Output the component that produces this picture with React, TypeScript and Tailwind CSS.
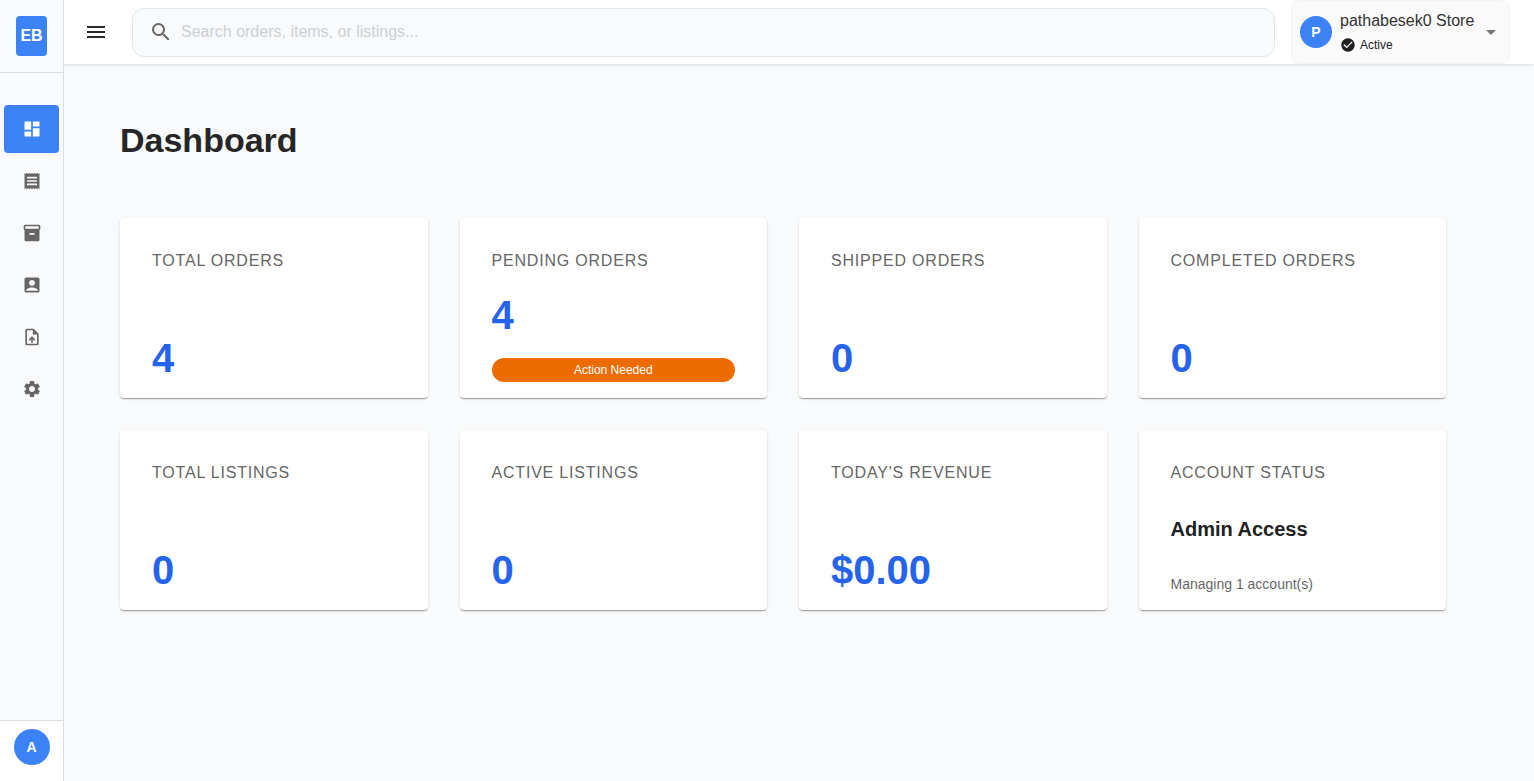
import type { ReactNode } from "react";
import type { IconType } from "react-icons";
import {
  MdAccountBox,
  MdArrowDropDown,
  MdCheckCircle,
  MdDashboard,
  MdInventory2,
  MdMenu,
  MdReceipt,
  MdSearch,
  MdSettings,
  MdUploadFile,
} from "react-icons/md";

const navItems: { label: string; icon: IconType; active?: boolean }[] = [
  { label: "Dashboard", icon: MdDashboard, active: true },
  { label: "Orders", icon: MdReceipt },
  { label: "Listings", icon: MdInventory2 },
  { label: "Accounts", icon: MdAccountBox },
  { label: "Import", icon: MdUploadFile },
  { label: "Settings", icon: MdSettings },
];

function Sidebar() {
  return (
    <aside className="z-10 flex w-16 shrink-0 flex-col border-r border-[#dcdddf] bg-[#f8fafc]">
      <div className="border-b border-[#dcdddf] p-4">
        <div className="flex h-10 items-center justify-center rounded bg-[#3b82f6] font-bold text-white">
          EB
        </div>
      </div>
      <nav className="flex grow flex-col gap-1 px-1 pt-8">
        {navItems.map(({ label, icon: Icon, active }) => (
          <a
            key={label}
            href="#"
            aria-label={label}
            aria-current={active ? "page" : undefined}
            className={
              active
                ? "flex h-12 items-center justify-center rounded bg-[#3b82f6] text-white"
                : "flex h-12 items-center justify-center rounded text-[#666666]"
            }
          >
            <Icon className="size-5" />
          </a>
        ))}
      </nav>
      <div className="flex justify-center border-t border-[#dcdddf] bg-white pt-2 pb-4">
        <button
          type="button"
          aria-label="User menu"
          className="flex size-9 items-center justify-center rounded-full bg-[#3b82f6] text-sm font-bold text-white"
        >
          A
        </button>
      </div>
    </aside>
  );
}

function TopBar() {
  return (
    <header className="flex h-16 items-center bg-white pr-6 pl-2 shadow-[0_1px_3px_rgba(0,0,0,0.12)]">
      <button
        type="button"
        aria-label="Toggle menu"
        className="mr-3 flex size-12 shrink-0 items-center justify-center text-[#2b2b2b]"
      >
        <MdMenu className="size-6" />
      </button>
      <label className="mr-4 flex h-[49px] grow items-center gap-2 rounded-xl border border-[#e2e5ea] bg-[#f8fafc] px-4">
        <MdSearch className="size-6 shrink-0 text-[#666666]" aria-hidden />
        <input
          type="search"
          aria-label="Search"
          placeholder="Search orders, items, or listings..."
          className="h-full w-full bg-transparent text-base text-[#212121] outline-none placeholder:text-[#cccfd2]"
        />
      </label>
      <button
        type="button"
        aria-haspopup="listbox"
        className="flex h-16 min-w-[219px] shrink-0 items-center gap-1 rounded-lg border border-[#f4f4f4] bg-[#fafafa] pr-1.5 pl-2 text-left text-[#212121]"
      >
        <span className="mr-1 flex size-8 items-center justify-center rounded-full bg-[#3b82f6] text-sm font-bold text-white">
          P
        </span>
        <span className="grow">
          <span className="block text-base leading-[25px] text-[#333333]">pathabesek0 Store</span>
          <span className="flex items-center gap-1 text-xs leading-6">
            <MdCheckCircle className="size-4" />
            Active
          </span>
        </span>
        <MdArrowDropDown className="size-6 text-[#757575]" />
      </button>
    </header>
  );
}

function Card({ title, children }: { title: string; children: ReactNode }) {
  return (
    <section className="flex h-[180px] flex-col justify-between rounded bg-white px-8 pt-8 pb-4 shadow-[0_2px_1px_-1px_rgba(0,0,0,0.2),0_1px_1px_0_rgba(0,0,0,0.14),0_1px_3px_0_rgba(0,0,0,0.12)]">
      <h2 className="text-base leading-[22px] tracking-wider text-[#666666] uppercase">{title}</h2>
      {children}
    </section>
  );
}

function Value({ children }: { children: ReactNode }) {
  return <p className="text-[40px] leading-12 font-bold text-[#2563eb]">{children}</p>;
}

export default function App() {
  return (
    <div className="flex min-h-screen bg-[#f8fafc] font-['Liberation_Sans',Arial,sans-serif] text-[#212121]">
      <Sidebar />
      <div className="flex min-w-0 grow flex-col">
        <TopBar />
        <main className="pt-14 pr-[88px] pb-14 pl-14">
          <h1 className="mb-[58px] text-[34px] leading-10 font-bold text-[#262626]">Dashboard</h1>
          <div className="grid grid-cols-4 gap-8">
            <Card title="Total Orders">
              <Value>4</Value>
            </Card>
            <Card title="Pending Orders">
              <Value>4</Value>
              <p className="rounded-full bg-[#ed6c02] text-center text-xs leading-6 text-white">
                Action Needed
              </p>
            </Card>
            <Card title="Shipped Orders">
              <Value>0</Value>
            </Card>
            <Card title="Completed Orders">
              <Value>0</Value>
            </Card>
            <Card title="Total Listings">
              <Value>0</Value>
            </Card>
            <Card title="Active Listings">
              <Value>0</Value>
            </Card>
            <Card title="Today's Revenue">
              <Value>$0.00</Value>
            </Card>
            <Card title="Account Status">
              <p className="text-xl leading-8 font-bold">Admin Access</p>
              <p className="text-sm leading-5 text-[#666666]">Managing 1 account(s)</p>
            </Card>
          </div>
        </main>
      </div>
    </div>
  );
}
